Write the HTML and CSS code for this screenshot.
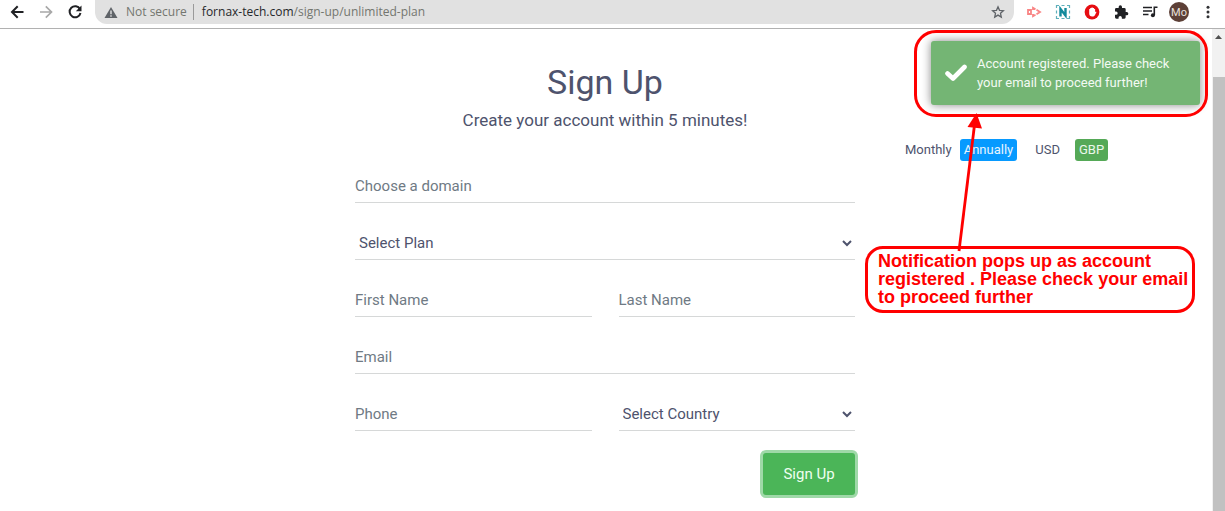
FILE: index.html
```html
<!DOCTYPE html>
<html lang="en">
<head>
<meta charset="utf-8">
<title>Sign Up</title>
<link rel="stylesheet" href="styles.css">
</head>
<body>
<header class="toolbar">
  <nav class="nav-buttons">
    <button class="icon-button" type="button" aria-label="Back">
      <svg width="16" height="16" viewBox="0 0 16 16" fill="none" stroke="#202124" stroke-width="2"><path d="M14.500 8H3M8.700 2.300 3 8l5.700 5.700"/></svg>
    </button>
    <button class="icon-button" type="button" aria-label="Forward">
      <svg width="16" height="16" viewBox="0 0 16 16" fill="none" stroke="#a8a8a8" stroke-width="1.700"><path d="M2 8h11M7.800 2.300 13.500 8l-5.700 5.700"/></svg>
    </button>
    <button class="icon-button" type="button" aria-label="Reload">
      <svg width="16" height="16" viewBox="0 0 16 16"><path d="M13 5.200A5.500 5.500 0 1 0 13.500 9" fill="none" stroke="#202124" stroke-width="2"/><path d="M14.500 1.500v5.700H8.800z" fill="#202124"/></svg>
    </button>
  </nav>
  <div class="address-bar">
    <svg width="14" height="13" viewBox="0 0 14 13"><path d="M7 1 13.500 12H.5z" fill="#5f6368"/><path d="M7 4.500v3.700M7 9.200v1.500" stroke="#e1e1e1" stroke-width="1.400"/></svg>
    <span class="security">Not secure</span>
    <span class="url"><span class="host">fornax-tech.com</span>/sign-up/unlimited-plan</span>
    <button class="icon-button star" type="button" aria-label="Bookmark">
      <svg width="14" height="14" viewBox="0 0 14 14"><path d="m7 1.800 1.500 3.500 3.900.4-2.900 2.600.8 3.800L7 10.100l-3.300 2 .8-3.800-2.900-2.600 3.900-.4z" fill="none" stroke="#5f6368" stroke-width="1.300"/></svg>
    </button>
  </div>
  <div class="extensions">
    <button class="icon-button" type="button" aria-label="Recorder">
      <svg width="16" height="16" viewBox="0 0 16 16" fill="none" stroke="#f98585" stroke-width="1.800"><path d="M2 6h3v4H2z"/><path d="M7 6V3.800l2.500 1.400M10.500 5.800 14 8l-3.500 2.200M9.500 10.800 7 12.200V10"/></svg>
    </button>
    <button class="icon-button" type="button" aria-label="Nimbus">
      <svg width="16" height="16" viewBox="0 0 16 16" fill="none" stroke="#128a9c"><path d="M1.500 4V1.500H4M6.500 1.500h3M12 1.500h2.500V4M14.500 6.500v3M14.500 12v2.500H12M9.500 14.500h-3M4 14.500H1.500V12M1.500 9.500v-3" stroke="#5fb0bb" stroke-width="1.200"/><path d="M5.500 12.500V5l5 6.500V4" stroke-width="2.400"/></svg>
    </button>
    <button class="icon-button" type="button" aria-label="Blocker">
      <svg width="16" height="16" viewBox="0 0 16 16"><circle cx="8" cy="8" r="7.400" fill="#e60d12"/><path d="M5.200 5h1V4h1.300v-.6h1.300V4h1.300v.9h1v3.300l.7-.7.700.5-1.500 2.900c-.6 1-1.400 1.500-2.800 1.500-2 0-3-1.100-3-3z" fill="#fff"/></svg>
    </button>
    <button class="icon-button" type="button" aria-label="Extensions">
      <svg width="16" height="16" viewBox="0 0 24 24"><path d="M20.500 12H19V8a2 2 0 0 0-2-2h-3.500V4.500a2.500 2.500 0 0 0-5 0V6H5a2 2 0 0 0-2 2v3.300h1.500a2.500 2.500 0 0 1 0 5H3V20a2 2 0 0 0 2 2h3.300v-1.500a2.500 2.500 0 0 1 5 0V22H17a2 2 0 0 0 2-2v-3h1.500a2.500 2.500 0 0 0 0-5z" fill="#202124"/></svg>
    </button>
    <button class="icon-button" type="button" aria-label="Media">
      <svg width="16" height="16" viewBox="0 0 16 16"><path d="M1 3.500h9M1 7h9M1 10.500h5.500M12.300 11V3.300h3.200" fill="none" stroke="#202124" stroke-width="1.600"/><circle cx="10.900" cy="11.200" r="2" fill="#202124"/></svg>
    </button>
    <button class="avatar" type="button">Mo</button>
    <button class="icon-button" type="button" aria-label="Menu">
      <svg width="16" height="16" viewBox="0 0 16 16" fill="#303134"><circle cx="8" cy="3.300" r="1.500"/><circle cx="8" cy="8" r="1.500"/><circle cx="8" cy="12.700" r="1.500"/></svg>
    </button>
  </div>
</header>

<div class="viewport">
  <main class="page">
    <form class="signup">
      <h1 class="title">Sign Up</h1>
      <p class="subtitle">Create your account within 5 minutes!</p>
      <div class="fields">
        <input class="field wide" type="text" placeholder="Choose a domain" aria-label="Choose a domain">
        <select class="field wide" aria-label="Select Plan"><option>Select Plan</option></select>
        <input class="field" type="text" placeholder="First Name" aria-label="First Name">
        <input class="field" type="text" placeholder="Last Name" aria-label="Last Name">
        <input class="field wide" type="email" placeholder="Email" aria-label="Email">
        <input class="field" type="tel" placeholder="Phone" aria-label="Phone">
        <select class="field" aria-label="Select Country"><option>Select Country</option></select>
      </div>
      <button class="submit" type="button">Sign Up</button>
    </form>
    <aside class="switches">
      <button class="switch" type="button">Monthly</button>
      <button class="switch annually" type="button">Annually</button>
      <button class="switch usd" type="button">USD</button>
      <button class="switch gbp" type="button">GBP</button>
    </aside>

    <div class="toast" role="status">
      <svg width="22" height="18" viewBox="0 0 22 18"><path d="m2.500 9.500 5.500 5L19.500 3" fill="none" stroke="#fff" stroke-width="4.600" stroke-linecap="round" stroke-linejoin="round"/></svg>
      <p class="toast-text">Account registered. Please check your email to proceed further!</p>
    </div>
    <div class="ring"></div>
    <p class="note">Notification pops up as account<br>registered . Please check your email<br>to proceed further</p>
    <svg class="arrow" width="24" height="140" viewBox="0 0 24 140"><path d="M4 138 19.500 12" stroke="#f00" stroke-width="2.800"/><path d="M21.500 0 27 15.500 12.500 14z" fill="#f00"/></svg>
  </main>
  <div class="scrollbar">
    <svg class="scroll-up" width="13" height="16" viewBox="0 0 13 16"><path d="m3 10 3.500-4 3.500 4z" fill="#505050"/></svg>
    <div class="thumb"></div>
  </div>
</div>
</body>
</html>
```
FILE: styles.css
```css
* { box-sizing: border-box; }
body {
  margin: 0;
  height: 100vh;
  display: flex;
  flex-direction: column;
  overflow: hidden;
  background: #fff;
  color: #4e536d;
  font-family: Roboto, "Liberation Sans", sans-serif;
}
button, input, select { font: inherit; color: inherit; }
svg { display: block; }

.toolbar {
  display: flex;
  align-items: center;
  height: 29px;
  flex: none;
  padding: 0 9px 4px;
  border-bottom: 1px solid #b1b1b1;
}
.nav-buttons { display: flex; gap: 13px; }
.icon-button {
  padding: 0;
  border: 0;
  background: none;
}
.address-bar {
  flex: 1;
  display: flex;
  align-items: center;
  height: 24px;
  margin-left: 12px;
  padding: 0 9px;
  background: #e1e1e1;
  border-radius: 0 0 12px 12px;
  font: 12px/16px "Open Sans", sans-serif;
  color: #73766f;
}
.security {
  margin: 0 8px;
  padding-right: 6px;
  border-right: 1px solid #9a9a9a;
}
.host { color: #26282b; }
.star { margin-left: auto; }
.extensions {
  display: flex;
  align-items: center;
  gap: 13px;
  margin-left: 12px;
}
.avatar {
  width: 20px;
  height: 20px;
  margin: 0 -2px;
  padding: 0;
  border: 0;
  border-radius: 50%;
  background: #5d4037;
  color: #e8e0dd;
  font-size: 11px;
}

.viewport { flex: 1; display: flex; min-height: 0; }
.page {
  flex: 1;
  position: relative;
  display: grid;
  grid-template-columns: 1fr 500px 1fr;
  align-items: start;
  padding-right: 2px;
}
.signup {
  grid-column: 2;
  display: flex;
  flex-direction: column;
  padding-top: 32px;
}
.title {
  margin: 0;
  font-size: 34px;
  line-height: 42px;
  font-weight: 400;
  text-align: center;
}
.subtitle {
  margin: 5px 0 36px;
  font-size: 17px;
  line-height: 25px;
  text-align: center;
}
.fields {
  display: grid;
  grid-template-columns: 1fr 1fr;
  gap: 23px 27px;
}
.field {
  width: 100%;
  min-width: 0;
  height: 34px;
  padding: 0;
  border: 0;
  border-bottom: 1px solid #d6d8d8;
  border-radius: 0;
  background: none;
  font-size: 15px;
  outline: 0;
}
.field::placeholder { color: #6f7a84; opacity: 1; }
.wide { grid-column: 1 / -1; }
.submit {
  align-self: flex-end;
  width: 92px;
  height: 42px;
  margin-top: 22px;
  border: 0;
  border-radius: 3px;
  background: #4bb558;
  box-shadow: 0 0 0 3px #9fd9a8;
  color: #effff0;
  font-size: 15px;
}
.switches {
  display: flex;
  align-items: center;
  padding: 110px 0 0 46px;
}
.switch {
  height: 22px;
  padding: 0 4px 2px;
  border: 0;
  border-radius: 3px;
  background: none;
  font-size: 13px;
}
.annually { margin: 0 14px 0 4px; background: #079aff; color: #e6f5ff; }
.usd { margin-right: 11px; }
.gbp { background: #55a957; color: #ecf8ec; }

.toast {
  position: absolute;
  top: 12px;
  right: 12px;
  width: 269px;
  display: flex;
  align-items: center;
  gap: 10px;
  padding: 13px 14px;
  border-radius: 3px;
  background: #74b574;
  box-shadow: 0 0 10px #888;
  color: #f3faf3;
}
.toast svg { flex: none; }
.toast-text { flex: 1; margin: 0; font-size: 13px; line-height: 19px; }
.ring {
  position: absolute;
  top: 1px;
  right: 4px;
  width: 294px;
  height: 87px;
  border: 3px solid #f00;
  border-radius: 22px;
}
.note {
  position: absolute;
  top: 217px;
  right: 17px;
  width: 330px;
  margin: 0;
  padding: 3px 0 4px 10px;
  border: 3px solid #f00;
  border-radius: 18px;
  color: #f00;
  font: bold 18px/18px "Liberation Sans", Arial, sans-serif;
  white-space: nowrap;
}
.arrow { position: absolute; top: 84px; right: 233px; overflow: visible; }

.scrollbar { width: 13px; display: flex; flex-direction: column; background: #f1f1f1; }
.scroll-up { margin-bottom: 32px; }
.thumb { flex: 1; margin-left: 1px; background: #c1c1c1; }
```
